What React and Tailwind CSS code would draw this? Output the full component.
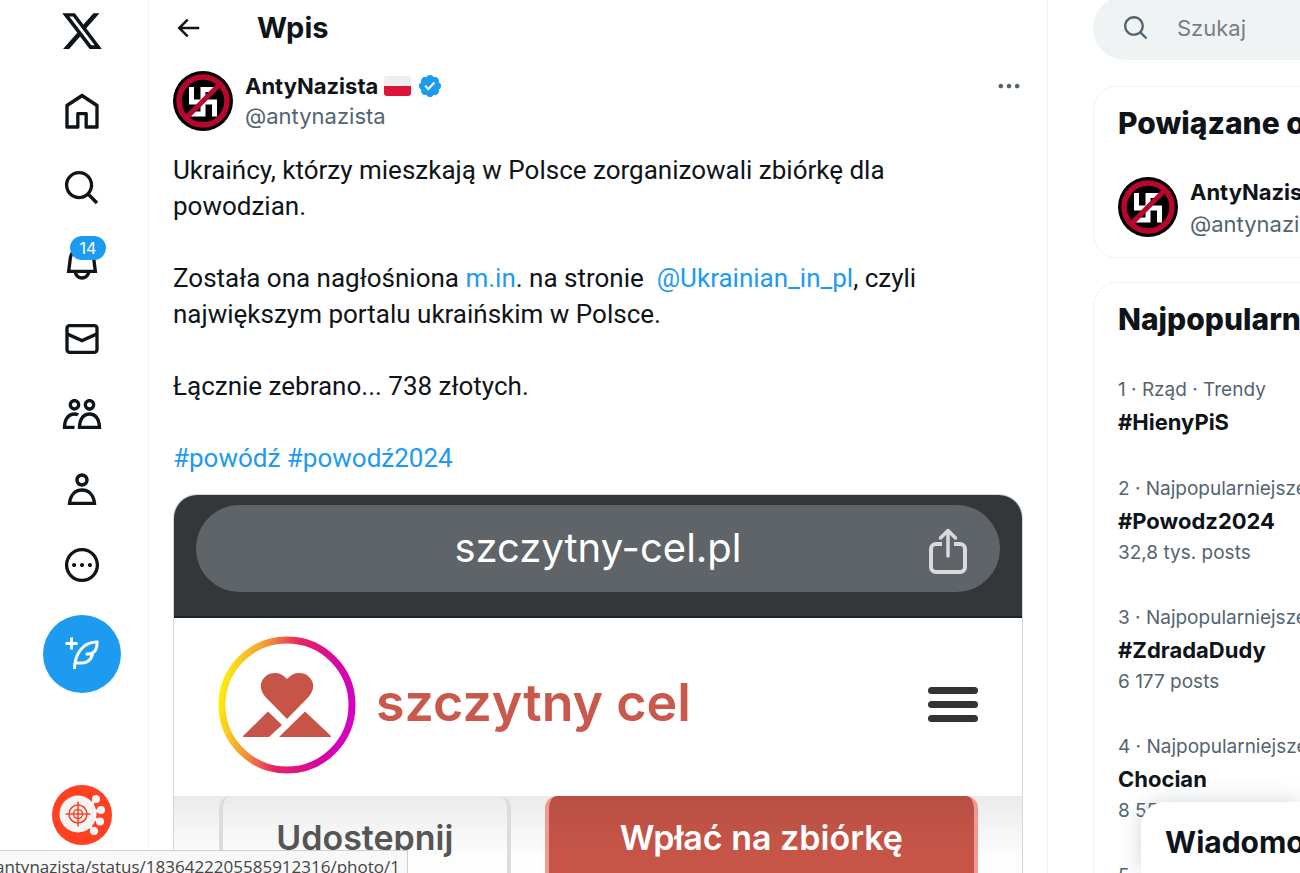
const NAV_ITEMS = [
  {
    label: "Główna",
    path: "M21.591 7.146L12.52 1.157c-.316-.21-.724-.21-1.04 0l-9.071 5.99c-.26.173-.409.456-.409.757v13.183c0 .502.418.913.929.913h6.638c.511 0 .929-.41.929-.913v-7.075h3.008v7.075c0 .502.418.913.929.913h6.639c.51 0 .928-.41.928-.913V7.904c0-.301-.158-.584-.408-.758zM20 20l-4.5.01.011-7.097c0-.502-.418-.913-.928-.913H9.44c-.511 0-.929.41-.929.913L8.5 20H4V8.773l8.011-5.342L20 8.764z",
  },
  {
    label: "Przeglądaj",
    path: "M10.25 3.75c-3.59 0-6.5 2.91-6.5 6.5s2.91 6.5 6.5 6.5c1.795 0 3.419-.726 4.596-1.904 1.178-1.177 1.904-2.801 1.904-4.596 0-3.59-2.91-6.5-6.5-6.5zm-8.5 6.5c0-4.694 3.806-8.5 8.5-8.5s8.5 3.806 8.5 8.5c0 1.986-.682 3.815-1.824 5.262l4.781 4.781-1.414 1.414-4.781-4.781c-1.447 1.142-3.276 1.824-5.262 1.824-4.694 0-8.5-3.806-8.5-8.5z",
  },
  {
    label: "Powiadomienia",
    badge: "14",
    path: "M19.993 9.042C19.48 5.017 16.054 2 11.996 2s-7.49 3.021-7.999 7.051L2.866 18H7.1c.463 2.282 2.481 4 4.9 4s4.437-1.718 4.9-4h4.236l-1.143-8.958zM12 20c-1.306 0-2.417-.835-2.829-2h5.658c-.412 1.165-1.523 2-2.829 2zm-6.866-4l.847-6.698C6.364 6.272 8.941 4 11.996 4s5.627 2.268 6.013 5.295L18.864 16H5.134z",
  },
  {
    label: "Wiadomości",
    path: "M1.998 5.5c0-1.381 1.119-2.5 2.5-2.5h15c1.381 0 2.5 1.119 2.5 2.5v13c0 1.381-1.119 2.5-2.5 2.5h-15c-1.381 0-2.5-1.119-2.5-2.5v-13zm2.5-.5c-.276 0-.5.224-.5.5v2.764l8 3.638 8-3.636V5.5c0-.276-.224-.5-.5-.5h-15zm15.5 5.463l-8 3.636-8-3.638V18.5c0 .276.224.5.5.5h15c.276 0 .5-.224.5-.5v-8.037z",
  },
  {
    label: "Społeczności",
    path: "M7.501 19.917L7.471 21H.472l.029-1.027c.184-6.618 3.736-8.977 7-8.977.963 0 1.95.212 2.87.672-.444.478-.851 1.03-1.212 1.656-.507-.204-1.054-.329-1.658-.329-2.767 0-4.57 2.223-4.938 6.004H7.56c-.023.302-.05.599-.059.917zm15.998.056L23.528 21H9.472l.029-1.027c.184-6.618 3.736-8.977 7-8.977s6.816 2.358 7 8.977zM21.437 19c-.367-3.781-2.17-6.004-4.938-6.004s-4.57 2.223-4.938 6.004h9.875zm-4.938-9c-.799 0-1.527-.279-2.116-.73-.836-.64-1.384-1.638-1.384-2.77 0-1.93 1.567-3.5 3.5-3.5s3.5 1.57 3.5 3.5c0 1.132-.548 2.13-1.384 2.77-.589.451-1.317.73-2.116.73zm-1.5-3.5c0 .827.673 1.5 1.5 1.5s1.5-.673 1.5-1.5-.673-1.5-1.5-1.5-1.5.673-1.5 1.5zM7.5 3C9.433 3 11 4.57 11 6.5S9.433 10 7.5 10 4 8.43 4 6.5 5.567 3 7.5 3zm0 2C6.673 5 6 5.673 6 6.5S6.673 8 7.5 8 9 7.327 9 6.5 8.327 5 7.5 5z",
  },
  {
    label: "Profil",
    path: "M5.651 19h12.698c-.337-1.8-1.023-3.21-1.945-4.19C15.318 13.65 13.838 13 12 13s-3.317.65-4.404 1.81c-.922.98-1.608 2.39-1.945 4.19zm.486-5.56C7.627 11.85 9.648 11 12 11s4.373.85 5.863 2.44c1.477 1.58 2.366 3.8 2.632 6.46l.11 1.1H3.395l.11-1.1c.266-2.66 1.155-4.88 2.632-6.46zM12 4c-1.105 0-2 .9-2 2s.895 2 2 2 2-.9 2-2-.895-2-2-2zM8 6c0-2.21 1.791-4 4-4s4 1.79 4 4-1.791 4-4 4-4-1.79-4-4z",
  },
  {
    label: "Więcej",
    path: "M3.75 12c0-4.56 3.69-8.25 8.25-8.25s8.25 3.69 8.25 8.25-3.69 8.25-8.25 8.25S3.75 16.56 3.75 12zM12 1.75C6.34 1.75 1.75 6.34 1.75 12S6.34 22.25 12 22.25 22.25 17.66 22.25 12 17.66 1.75 12 1.75zm-4.75 11.5c.69 0 1.25-.56 1.25-1.25s-.56-1.25-1.25-1.25S6 11.31 6 12s.56 1.25 1.25 1.25zm9.5 0c.69 0 1.25-.56 1.25-1.25s-.56-1.25-1.25-1.25-1.25.56-1.25 1.25.56 1.25 1.25 1.25zM13.25 12c0 .69-.56 1.25-1.25 1.25s-1.25-.56-1.25-1.25.56-1.25 1.25-1.25 1.25.56 1.25 1.25z",
  },
];

const ICONS = {
  logo: "M18.244 2.25h3.308l-7.227 8.26 8.502 11.24H16.17l-5.214-6.817L4.99 21.75H1.68l7.73-8.835L1.254 2.25H8.08l4.713 6.231zm-1.161 17.52h1.833L7.084 4.126H5.117z",
  compose:
    "M23 3c-6.62-.1-10.38 2.421-13.05 6.03C7.29 12.61 6 17.331 6 22h2c0-1.007.07-2.012.19-3H12c4.1 0 7.48-3.082 7.94-7.054C22.79 10.147 23.17 6.359 23 3zm-7 8h-1.5v2H16c.63-.016 1.2-.08 1.72-.188C16.95 15.24 14.68 17 12 17H8.55c.57-2.512 1.57-4.851 3-6.78 2.16-2.912 5.29-4.911 9.45-5.187C20.95 8.079 19.9 11 16 11zM4 9V6H1V4h3V1h2v3h3v2H6v3H4z",
  back: "M7.414 13l5.043 5.04-1.414 1.42L3.586 12l7.457-7.46 1.414 1.42L7.414 11H21v2H7.414z",
  dots: "M3 12c0-1.1.9-2 2-2s2 .9 2 2-.9 2-2 2-2-.9-2-2zm9 2c1.1 0 2-.9 2-2s-.9-2-2-2-2 .9-2 2 .9 2 2 2zm7 0c1.1 0 2-.9 2-2s-.9-2-2-2-2 .9-2 2 .9 2 2 2z",
  verified:
    "M20.396 11c-.018-.646-.215-1.275-.57-1.816-.354-.54-.852-.972-1.438-1.246.223-.607.27-1.264.14-1.897-.131-.634-.437-1.218-.882-1.687-.47-.445-1.053-.75-1.687-.882-.633-.13-1.29-.083-1.897.14-.273-.587-.704-1.086-1.245-1.44S11.647 1.62 11 1.604c-.646.017-1.273.213-1.813.568s-.969.854-1.24 1.44c-.608-.223-1.267-.272-1.902-.14-.635.13-1.22.436-1.69.882-.445.47-.749 1.055-.878 1.688-.13.633-.08 1.29.144 1.896-.587.274-1.087.705-1.443 1.245-.356.54-.555 1.17-.574 1.817.02.647.218 1.276.574 1.817.356.54.856.972 1.443 1.245-.224.606-.274 1.263-.144 1.896.13.634.433 1.218.877 1.688.47.443 1.054.747 1.687.878.633.132 1.29.084 1.897-.136.274.586.705 1.084 1.246 1.439.54.354 1.17.551 1.816.569.647-.016 1.276-.213 1.817-.567s.972-.854 1.245-1.44c.604.239 1.266.296 1.903.164.636-.132 1.22-.447 1.68-.907.46-.46.776-1.044.908-1.681s.075-1.299-.165-1.903c.586-.274 1.084-.705 1.439-1.246.354-.54.551-1.17.569-1.816zM9.662 14.85l-3.429-3.428 1.293-1.302 2.072 2.072 4.4-4.794 1.347 1.246z",
};

const TRENDS = [
  { meta: "1 · Rząd · Trendy", name: "#HienyPiS" },
  { meta: "2 · Najpopularniejsze", name: "#Powodz2024", posts: "32,8 tys. posts" },
  { meta: "3 · Najpopularniejsze", name: "#ZdradaDudy", posts: "6 177 posts" },
  { meta: "4 · Najpopularniejsze", name: "Chocian", posts: "8 557 posts" },
  { meta: "5 · Najpopularniejsze", name: "Polska" },
];

function Icon({ path, className, viewBox = "0 0 24 24" }) {
  return (
    <svg viewBox={viewBox} aria-hidden="true" fill="currentColor" className={className}>
      <path d={path} />
    </svg>
  );
}

// crossed-out symbol used as the author's avatar
function AuthorAvatar() {
  return (
    <svg viewBox="0 0 60 60" aria-hidden="true" className="size-[60px] shrink-0">
      <circle cx="30" cy="30" r="30" fill="#000" />
      <path
        d="M18.500 16v15h23v14.500M42 18.500H30v24.500H16"
        fill="none"
        stroke="#fff"
        strokeWidth="5"
      />
      <circle cx="30" cy="30" r="24" fill="none" stroke="#b8062f" strokeWidth="5.500" />
      <path d="M14 46L46 14" stroke="#b8062f" strokeWidth="5" />
    </svg>
  );
}

function AccountAvatar() {
  return (
    <svg viewBox="0 0 60 60" aria-hidden="true" className="size-[60px]">
      <circle cx="30" cy="30" r="30" fill="#ff4122" />
      <g fill="#f5f5f5" stroke="#f5f5f5">
        <circle cx="26" cy="29" r="18.500" stroke="none" />
        <path d="M37 22l6-7M40 27l9-2M40 33l8 3M35 38l7 8" strokeWidth="3" />
        <circle cx="44" cy="14" r="4" stroke="none" />
        <circle cx="49" cy="25" r="4" stroke="none" />
        <circle cx="48" cy="36.500" r="4" stroke="none" />
        <circle cx="42" cy="46" r="4" stroke="none" />
      </g>
      <g fill="none" stroke="#ff4122" strokeWidth="1.500">
        <circle cx="26" cy="29" r="9" />
        <circle cx="26" cy="29" r="4.500" />
        <path d="M13.500 29h25M26 16.500v25" />
      </g>
    </svg>
  );
}

function PolishFlag() {
  return (
    <svg viewBox="0 0 27 20" role="img" aria-label="Polska" className="h-5 w-[27px]">
      <path d="M0 10V3a3 3 0 013-3h21a3 3 0 013 3v7z" fill="#eee" />
      <path d="M0 10v7a3 3 0 003 3h21a3 3 0 003-3v-7z" fill="#dc143c" />
    </svg>
  );
}

function CharityLogo() {
  return (
    <svg viewBox="0 0 138 138" aria-hidden="true" className="size-[138px] shrink-0">
      <defs>
        <linearGradient id="ring" x1="0" y1="0.4" x2="1" y2="0.6">
          <stop offset="0" stopColor="#fde910" />
          <stop offset="0.25" stopColor="#f29a38" />
          <stop offset="0.5" stopColor="#e6245f" />
          <stop offset="0.85" stopColor="#d404a8" />
          <stop offset="1" stopColor="#d600c4" />
        </linearGradient>
      </defs>
      <circle cx="69" cy="69" r="65" fill="none" stroke="url(#ring)" strokeWidth="7" />
      <g fill="#c65548">
        <path d="M69 83L47.500 61C43 56 42 50 43.500 46c4-10.500 18-12.500 25.500-3 7.500-9.500 21.500-7.500 25.500 3 1.500 4 .5 10-4 15z" />
        <path d="M50 75.500L64 89 51 101H26q-2 0-.5-1.500zM87 75.500l25.500 24q1 1.500-.5 1.500H61z" />
      </g>
    </svg>
  );
}

function ShareIcon() {
  return (
    <svg
      viewBox="0 0 40 48"
      fill="none"
      stroke="#d9dade"
      strokeWidth="4"
      strokeLinecap="round"
      strokeLinejoin="round"
      className="h-12 w-10"
    >
      <path d="M14 17H8a5 5 0 00-5 5v18a5 5 0 005 5h24a5 5 0 005-5V22a5 5 0 00-5-5h-6" strokeLinecap="butt" />
      <path d="M20 29V4M12.500 11L20 3.500 27.500 11" strokeWidth="3.500" />
    </svg>
  );
}

function SideNav() {
  return (
    <header className="flex w-[149px] shrink-0 flex-col items-center border-r border-[#eff3f4] pl-4">
      <a href="#home" aria-label="X" className="flex h-[62px] items-center">
        <Icon path={ICONS.logo} className="size-[44px]" />
      </a>

      <nav className="mt-5 flex h-[513px] flex-col justify-between">
        {NAV_ITEMS.map((item) => (
          <a
            key={item.label}
            href="#nav"
            aria-label={item.label}
            className="relative flex size-[60px] items-center justify-center"
          >
            <Icon path={item.path} className="size-10" />
            {item.badge && (
              <span className="absolute top-[3px] right-1.5 flex h-6 w-9 items-center justify-center rounded-full bg-[#1d9bf0] text-base text-white">
                {item.badge}
              </span>
            )}
          </a>
        ))}
      </nav>

      <button
        type="button"
        aria-label="Opublikuj wpis"
        className="mt-5 flex size-[78px] shrink-0 items-center justify-center rounded-full bg-[#1d9bf0] text-white"
      >
        <Icon path={ICONS.compose} className="size-9" />
      </button>

      <button type="button" aria-label="Konto" className="mt-auto mb-7">
        <AccountAvatar />
      </button>
    </header>
  );
}

function PostPhoto() {
  return (
    <div className="mt-[18px] flex-1 overflow-hidden rounded-t-3xl border border-b-0 border-[#cfd9de]">
      <div className="h-[123px] border-b-2 border-[#222] bg-[#33373a] px-[22px] pt-[10px]">
        <div className="grid h-[87px] grid-cols-[1fr_auto_1fr] items-center rounded-full bg-[#5f6468] px-8">
          <span className="col-start-2 pb-0.5 text-[40px] leading-none text-white">szczytny-cel.pl</span>
          <span className="justify-self-end pt-1">
            <ShareIcon />
          </span>
        </div>
      </div>

      <div className="flex h-[178px] items-center bg-white px-11 pb-1">
        <CharityLogo />
        <span className="ml-5 pb-1 text-[52px] leading-none font-semibold text-[#c9584d]">szczytny cel</span>
        <button type="button" aria-label="Menu" className="ml-auto flex flex-col gap-[7px] pb-0.5">
          <span className="h-[7px] w-[50px] rounded-full bg-[#333]" />
          <span className="h-[7px] w-[50px] rounded-full bg-[#333]" />
          <span className="h-[7px] w-[50px] rounded-full bg-[#333]" />
        </button>
      </div>

      <div className="flex h-[120px] gap-[34px] bg-linear-to-b from-[#ebebeb] to-[#fdfdfd] to-50% pr-11 pl-[45px] text-[34px]">
        <button
          type="button"
          className="h-[110px] flex-2 rounded-xl border-4 border-t-0 border-[#dcdcdc] pb-6 font-semibold text-[#555]"
        >
          Udostępnij
        </button>
        <button
          type="button"
          className="h-[110px] flex-3 rounded-xl border-4 border-t-0 border-[#ee9a92] bg-linear-to-b from-[#b84f43] to-[#c65548] to-50% pb-6 font-semibold text-white"
        >
          Wpłać na zbiórkę
        </button>
      </div>
    </div>
  );
}

function Post() {
  return (
    <main className="flex min-w-0 flex-1 flex-col border-r border-[#eff3f4] px-6">
      <div className="flex h-14 shrink-0 items-center">
        <button type="button" aria-label="Wstecz" className="flex w-[84px]">
          <Icon path={ICONS.back} className="size-[30px]" />
        </button>
        <h1 className="text-[29px] font-bold">Wpis</h1>
      </div>

      <article className="flex flex-1 flex-col pt-[15px]">
        <div className="flex gap-3">
          <AuthorAvatar />
          <div className="flex-1 text-[22px] leading-[30px]">
            <div className="flex items-center gap-1.5">
              <a href="#profile" className="font-bold">
                AntyNazista
              </a>
              <PolishFlag />
              <Icon path={ICONS.verified} viewBox="0 0 22 22" className="size-[26px] text-[#1d9bf0]" />
            </div>
            <a href="#profile" className="text-[#536471]">
              @antynazista
            </a>
          </div>
          <button type="button" aria-label="Więcej" className="h-[30px] self-start">
            <Icon path={ICONS.dots} className="size-7 text-[#536471]" />
          </button>
        </div>

        <div className="mt-[21px] font-['Roboto','Liberation_Sans',sans-serif] text-[26px] leading-9 whitespace-pre-wrap">
          <p>Ukraińcy, którzy mieszkają w Polsce zorganizowali zbiórkę dla powodzian.</p>
          <p className="mt-9">
            Została ona nagłośniona{" "}
            <a href="#min" className="text-[#1d9bf0]">
              m.in
            </a>
            . na stronie{"  "}
            <a href="#ukrainian" className="text-[#1d9bf0]">
              @Ukrainian_in_pl
            </a>
            , czyli największym portalu ukraińskim w Polsce.
          </p>
          <p className="mt-9">Łącznie zebrano... 738 złotych.</p>
          <p className="mt-9 text-[#1d9bf0]">
            <a href="#powodz">#powódź</a> <a href="#powodz2024">#powodź2024</a>
          </p>
        </div>

        <PostPhoto />
      </article>
    </main>
  );
}

function Sidebar() {
  return (
    <aside className="ml-[45px] w-[207px] shrink-0 overflow-hidden whitespace-nowrap">
      <div className="w-[525px]">
        <label className="-mt-1 flex h-16 items-center rounded-full bg-[#eff3f4] pl-[29px]">
          <Icon path={NAV_ITEMS[1].path} className="size-7 shrink-0 text-[#536471]" />
          <input
            type="text"
            aria-label="Szukaj"
            placeholder="Szukaj"
            className="ml-[27px] w-full bg-transparent text-[22px] outline-none placeholder:text-[#757f86]"
          />
        </label>

        <section className="mt-[26px] h-[172px] rounded-3xl border border-[#eff3f4] px-6 pt-4">
          <h2 className="text-[30px] leading-10 font-extrabold">Powiązane osoby</h2>
          <div className="mt-[34px] flex gap-3">
            <AuthorAvatar />
            <div className="-mt-px text-[22px] leading-8">
              <a href="#profile" className="block font-bold">
                AntyNazista
              </a>
              <a href="#profile" className="block text-[#536471]">
                @antynazista
              </a>
            </div>
          </div>
        </section>

        <section className="mt-6 rounded-3xl border border-[#eff3f4] px-6 pt-4">
          <h2 className="mb-[19px] text-[30px] leading-10 font-extrabold">Najpopularniejsze</h2>
          <ul>
            {TRENDS.map((trend) => (
              <li key={trend.name} className="pt-[17px] pb-[18px] text-[19px] text-[#536471]">
                <p className="leading-[30px]">{trend.meta}</p>
                <p className="text-[22px] leading-[34px] font-bold text-[#0f1419]">{trend.name}</p>
                {trend.posts && <p className="leading-[30px]">{trend.posts}</p>}
              </li>
            ))}
          </ul>
        </section>
      </div>
    </aside>
  );
}

export default function App() {
  return (
    <div className="relative flex h-screen overflow-hidden bg-white font-['Inter','Liberation_Sans',sans-serif] text-[#0f1419]">
      <SideNav />
      <Post />
      <Sidebar />

      <section className="absolute right-0 bottom-0 h-[71px] w-[159px] overflow-hidden rounded-tl-3xl bg-white pt-5 pl-6 shadow-[0_0_22px_rgba(101,119,134,0.3)]">
        <h2 className="text-[30px] leading-10 font-bold whitespace-nowrap">Wiadomości</h2>
      </section>

      <div className="absolute bottom-0 left-0 flex h-[23px] w-[408px] justify-end overflow-hidden border-t border-r border-[#d0d0d0] bg-[#f8f8f8] pr-[7px] font-['Open_Sans','Noto_Sans',sans-serif] text-[17px] leading-8 text-[#444]">
        antynazista/status/1836422205585912316/photo/1
      </div>
    </div>
  );
}
